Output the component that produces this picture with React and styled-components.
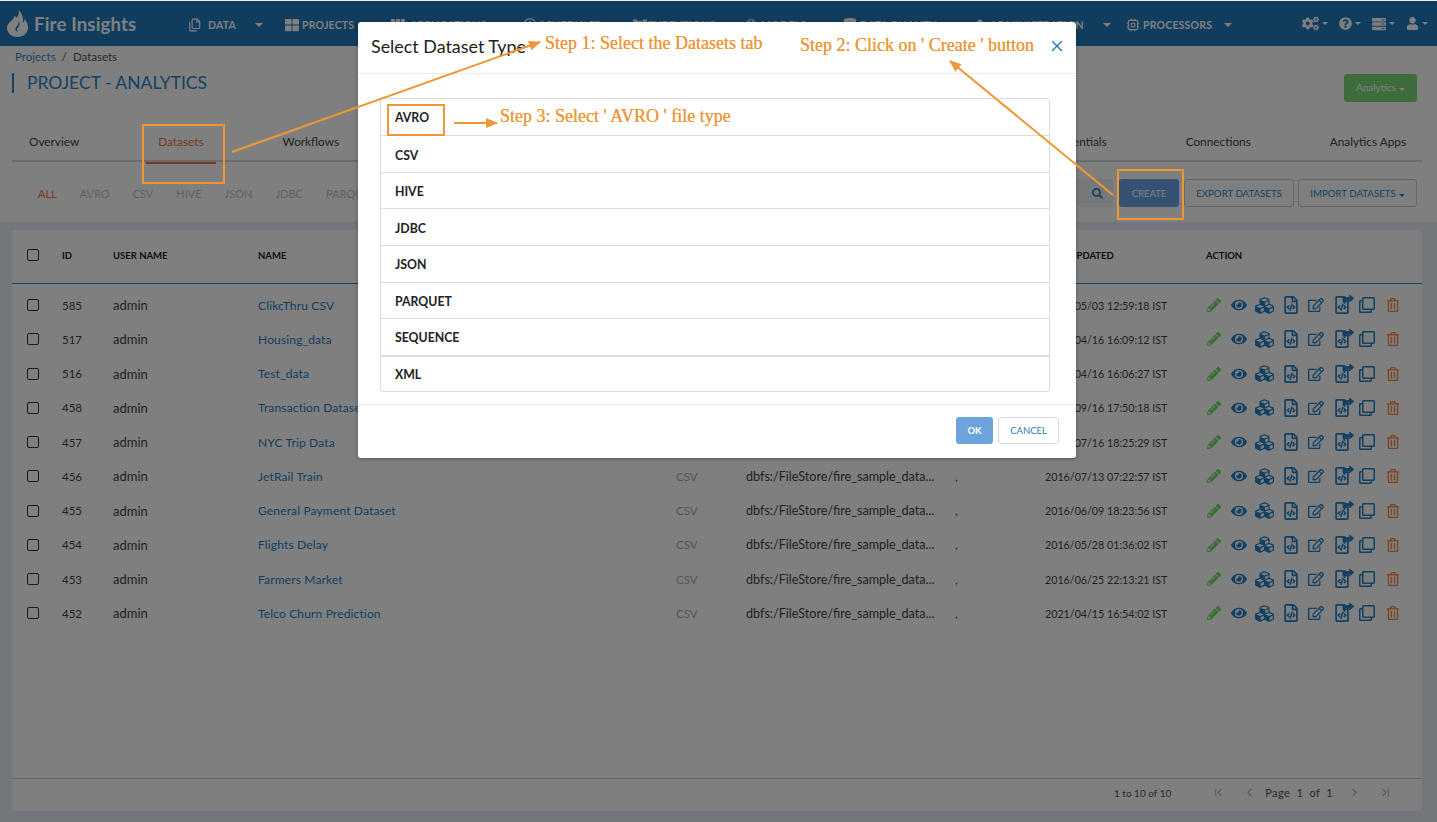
import React from "react";
import styled, { createGlobalStyle } from "styled-components";
import {
  FaCogs,
  FaCubes,
  FaEye,
  FaPencilAlt,
  FaQuestionCircle,
  FaRegClone,
  FaRegEdit,
  FaRegFileCode,
  FaRegTrashAlt,
  FaSearch,
  FaServer,
  FaShare,
  FaTh,
  FaThLarge,
  FaUser,
  FaDatabase,
  FaUserShield,
  FaRegClock,
  FaProjectDiagram,
} from "react-icons/fa";
import {
  LuChevronLeft,
  LuChevronRight,
  LuChevronFirst,
  LuChevronLast,
  LuX,
  LuFiles,
  LuCpu,
} from "react-icons/lu";

const navItems = [
  { label: "DATA", icon: <LuFiles />, w: 97, iconW: 20 },
  { label: "PROJECTS", icon: <FaThLarge />, w: 106, iconW: 17 },
  { label: "APPLICATIONS", icon: <FaTh />, w: 132, iconW: 19 },
  { label: "SCHEDULER", icon: <FaRegClock />, w: 110, iconW: 16 },
  { label: "EXECUTIONS", icon: <FaProjectDiagram />, w: 111, iconW: 15 },
  { label: "MODELS", icon: <FaCubes />, w: 99, iconW: 17 },
  { label: "DATA QUALITY", icon: <FaDatabase />, w: 132, iconW: 17 },
  { label: "ADMINISTRATION", icon: <FaUserShield />, w: 151, iconW: 15 },
  { label: "PROCESSORS", icon: <LuCpu />, w: 116, iconW: 17, caretGap: 12 },
];

const tabsLeft = ["Overview", "Datasets", "Workflows", "Analytics", "Executions", "Schedules"];
const tabsRight = ["Credentials", "Connections", "Analytics Apps"];
const filters = ["ALL", "AVRO", "CSV", "HIVE", "JSON", "JDBC", "PARQUET", "SEQUENCE", "XML"];
const types = ["AVRO", "CSV", "HIVE", "JDBC", "JSON", "PARQUET", "SEQUENCE", "XML"];

const rows = [
  [585, "ClikcThru CSV", "2021/05/03 12:59:18 IST"],
  [517, "Housing_data", "2021/04/16 16:09:12 IST"],
  [516, "Test_data", "2021/04/16 16:06:27 IST"],
  [458, "Transaction Dataset", "2016/09/16 17:50:18 IST"],
  [457, "NYC Trip Data", "2016/07/16 18:25:29 IST"],
  [456, "JetRail Train", "2016/07/13 07:22:57 IST"],
  [455, "General Payment Dataset", "2016/06/09 18:23:56 IST"],
  [454, "Flights Delay", "2016/05/28 01:36:02 IST"],
  [453, "Farmers Market", "2016/06/25 22:13:21 IST"],
  [452, "Telco Churn Prediction", "2021/04/15 16:54:02 IST"],
];

export default function App() {
  return (
    <Page>
      <GlobalStyle />
      <Header>
        <Logo>
          <svg width="21" height="27" viewBox="0 0 21 27">
            <path
              fill="#fff"
              d="M11.5 0c1.2 4 -1 6.400 -2 8 -.7-1-1.300-1.600-2.300-2.200C7.400 8 5.800 9.600 3.500 11.500 1.200 13.500 0 15.500 0 18c0 5 4.500 9 10.500 9S21 23 21 17.500c0-3.500-1.500-6.500-3.500-8.500 0 1.500-.5 3-1.500 3.500C16.500 8 15 3 11.500 0z"
            />
            <path
              fill="#2078bc"
              d="M11.500 11c.6 2.500-.6 4-1.700 5.200-1 1.100-1.800 2.200-1.300 3.700.4 1.100 1.400 1.800 2.600 1.700-1-.6-1.300-1.500-1-2.500.4-1.300 2-2.500 2.300-4.300.2-1.400-.1-2.800-.9-3.800z"
            />
          </svg>
          <LogoText>Fire Insights</LogoText>
        </Logo>
        <Nav>
          {navItems.map((item) => (
            <NavItem key={item.label} $w={item.w}>
              <NavIcon $w={item.iconW}>{item.icon}</NavIcon>
              {item.label}
              <Caret $gap={item.caretGap || 19} />
            </NavItem>
          ))}
        </Nav>
        <HeaderTools>
          <ToolIcon $size={17}><FaCogs /><SmallCaret /></ToolIcon>
          <ToolIcon><FaQuestionCircle /><SmallCaret /></ToolIcon>
          <ToolIcon $size={14}><FaServer /><SmallCaret /></ToolIcon>
          <ToolIcon><FaUser /><SmallCaret /></ToolIcon>
        </HeaderTools>
      </Header>

      <TopPanel>
        <Breadcrumb>
          <CrumbLink>Projects</CrumbLink>
          <span>/</span>
          <span>Datasets</span>
        </Breadcrumb>
        <TitleRow>
          <Title>PROJECT - ANALYTICS</Title>
          <GreenButton>Analytics<Caret $gap={3} $small /></GreenButton>
        </TitleRow>
        <Tabs>
          <TabGroup>
            {tabsLeft.map((t) => (
              <Tab key={t} $active={t === "Datasets"}>{t}</Tab>
            ))}
          </TabGroup>
          <TabGroup>
            {tabsRight.map((t) => (
              <Tab key={t}>{t}</Tab>
            ))}
          </TabGroup>
        </Tabs>
        <FilterRow>
          <Filters>
            {filters.map((f) => (
              <Filter key={f} $active={f === "ALL"}>{f}</Filter>
            ))}
          </Filters>
          <Actions>
            <SearchBox><FaSearch /></SearchBox>
            <SolidButton>CREATE</SolidButton>
            <OutlineButton $w={110}>EXPORT DATASETS</OutlineButton>
            <OutlineButton $w={119}>IMPORT DATASETS<Caret $gap={3} $small /></OutlineButton>
          </Actions>
        </FilterRow>
      </TopPanel>

      <Card>
        <HeadRow>
          <Check />
          <span>ID</span>
          <span>USER NAME</span>
          <span>NAME</span>
          <span>FORMAT</span>
          <span>PATH</span>
          <span>HEADER</span>
          <span>LAST UPDATED</span>
          <span>ACTION</span>
        </HeadRow>
        <TableBody>
          {rows.map(([id, name, updated]) => (
            <Row key={id}>
              <Check />
              <Cell $size={11.5}>{id}</Cell>
              <Cell $size={13}>admin</Cell>
              <NameLink>{name}</NameLink>
              <Muted>CSV</Muted>
              <Cell $size={12.6}>dbfs:/FileStore/fire_sample_data...</Cell>
              <Cell>,</Cell>
              <Cell $size={10.7}>{updated}</Cell>
              <ActionIcons>
                <ActionIcon $color="#70dc60"><FaPencilAlt /></ActionIcon>
                <ActionIcon $size={16}><FaEye /></ActionIcon>
                <ActionIcon $size={19}><FaCubes /></ActionIcon>
                <ActionIcon $size={18}><FaRegFileCode /></ActionIcon>
                <ActionIcon $size={16}><FaRegEdit /></ActionIcon>
                <ActionIcon $size={18}>
                  <FaRegFileCode />
                  <ShareBadge><FaShare /></ShareBadge>
                </ActionIcon>
                <ActionIcon $size={16}><FaRegClone /></ActionIcon>
                <ActionIcon $color="#fb8248" $size={14}><FaRegTrashAlt /></ActionIcon>
              </ActionIcons>
            </Row>
          ))}
        </TableBody>
        <Pagination>
          <PageCount>1 to 10 of 10</PageCount>
          <PagerIcons $left={41} $right={9}>
            <LuChevronFirst />
            <LuChevronLeft />
          </PagerIcons>
          <PageText>Page&nbsp; 1 &nbsp;of&nbsp; 1</PageText>
          <PagerIcons $left={15} $right={0}>
            <LuChevronRight />
            <LuChevronLast />
          </PagerIcons>
        </Pagination>
      </Card>

      <Backdrop />
      <ModalLayer>
        <Modal>
          <ModalHead>
            <ModalTitle>Select Dataset Type</ModalTitle>
            <CloseBtn><LuX /></CloseBtn>
          </ModalHead>
          <ModalBody>
            <TypeList>
              {types.map((t) => (
                <TypeItem key={t}>{t}</TypeItem>
              ))}
            </TypeList>
          </ModalBody>
          <ModalFoot>
            <OkButton>OK</OkButton>
            <CancelButton>CANCEL</CancelButton>
          </ModalFoot>
        </Modal>
      </ModalLayer>

      <Arrows viewBox="0 0 1437 822" width="1437" height="822">
        <defs>
          <marker id="tip" markerWidth="12" markerHeight="10" refX="11" refY="5" orient="auto" markerUnits="userSpaceOnUse">
            <path d="M0 0 L12 5 L0 10 Z" fill="#ee9737" />
          </marker>
        </defs>
        <line x1="232" y1="152" x2="540" y2="42" stroke="#ee9737" strokeWidth="2" markerEnd="url(#tip)" />
        <line x1="1113" y1="195" x2="950" y2="61" stroke="#ee9737" strokeWidth="2" markerEnd="url(#tip)" />
        <line x1="454" y1="123" x2="497" y2="123" stroke="#ee9737" strokeWidth="2" markerEnd="url(#tip)" />
      </Arrows>
      <Callout $left={142} $top={124} $w={83} $h={60} />
      <Callout $left={1117} $top={169} $w={67} $h={51} />
      <Callout $left={387} $top={104} $w={58} $h={32} />
      <Note $left={545} $top={33}>Step 1: Select the Datasets tab</Note>
      <Note $left={800} $top={35}>Step 2: Click on ' Create ' button</Note>
      <Note $left={500} $top={106}>Step 3: Select ' AVRO ' file type</Note>
    </Page>
  );
}

const GlobalStyle = createGlobalStyle`
  html, body {
    margin: 0;
    padding: 0;
    overflow: hidden;
  }
  body {
    font-family: Lato, "Open Sans", sans-serif;
    color: #333;
  }
  * {
    box-sizing: border-box;
  }
`;

const Page = styled.div`
  position: relative;
  width: 1437px;
  height: 822px;
  overflow: hidden;
  background: #e6eef6;
  padding-top: 1px;
`;

const Header = styled.header`
  height: 45px;
  background: #2078bc;
  display: flex;
  align-items: center;
  color: #fff;
`;

const Logo = styled.div`
  width: 188px;
  flex-shrink: 0;
  padding-left: 7px;
  display: flex;
  align-items: center;
  gap: 6px;
`;

const LogoText = styled.span`
  font-size: 18.5px;
  font-weight: 700;
  letter-spacing: 0.2px;
  padding-top: 1px;
`;

const Nav = styled.nav`
  display: flex;
  align-items: center;
  flex: 1;
  padding-top: 2px;
`;

const NavItem = styled.div`
  flex: 0 0 ${(p) => p.$w}px;
  display: flex;
  align-items: center;
  font-size: 10.5px;
  font-weight: 700;
  white-space: nowrap;
  letter-spacing: 0.2px;
`;

const NavIcon = styled.span`
  display: inline-flex;
  width: ${(p) => p.$w}px;
  font-size: 14px;
`;

const Caret = styled.i`
  display: inline-block;
  width: 0;
  height: 0;
  margin-left: ${(p) => p.$gap}px;
  border-left: ${(p) => (p.$small ? 3 : 4)}px solid transparent;
  border-right: ${(p) => (p.$small ? 3 : 4)}px solid transparent;
  border-top: ${(p) => (p.$small ? 3 : 4)}px solid currentColor;
`;

const HeaderTools = styled.div`
  display: flex;
  align-items: center;
  gap: 11px;
  padding-right: 9px;
`;

const ToolIcon = styled.span`
  display: inline-flex;
  align-items: center;
  font-size: ${(p) => p.$size || 13}px;
`;

const SmallCaret = styled.i`
  width: 0;
  height: 0;
  margin-left: 3px;
  border-left: 3px solid transparent;
  border-right: 3px solid transparent;
  border-top: 3px solid currentColor;
`;

const TopPanel = styled.section`
  height: 176px;
  background: #fff;
  padding: 0 20px 0 12px;
`;

const Breadcrumb = styled.div`
  display: flex;
  gap: 6px;
  height: 20px;
  align-items: center;
  padding-left: 3px;
  font-size: 11.5px;
  color: #555;
`;

const CrumbLink = styled.span`
  color: #3f86c4;
`;

const TitleRow = styled.div`
  display: flex;
  justify-content: space-between;
  align-items: center;
  height: 36px;
  margin-top: 2px;
`;

const Title = styled.h1`
  margin: -6px 0 0;
  padding-left: 13px;
  border-left: 2px solid #2b85c8;
  font-size: 17.5px;
  font-weight: 400;
  line-height: 20px;
  color: #2b85c8;
`;

const GreenButton = styled.button`
  width: 73px;
  height: 28px;
  border: 0;
  border-radius: 3px;
  background: #7ed97a;
  color: #fff;
  font: 400 10px Lato, sans-serif;
  margin-top: 3px;
  padding: 0 0 2px;
`;

const Tabs = styled.div`
  display: flex;
  justify-content: space-between;
  height: 58px;
  padding: 30px 16px 0 17px;
  border-bottom: 2px solid #d8d8d8;
  width: 1410px;
`;

const TabGroup = styled.div`
  display: flex;
  gap: 79px;
`;

const Tab = styled.div`
  position: relative;
  height: 15px;
  font-size: 11.8px;
  color: ${(p) => (p.$active ? "#f0743d" : "#444")};
  &::after {
    content: "";
    display: ${(p) => (p.$active ? "block" : "none")};
    position: absolute;
    left: -12px;
    right: -12px;
    bottom: -15px;
    height: 2px;
    background: #f0743d;
  }
`;

const FilterRow = styled.div`
  display: flex;
  justify-content: space-between;
  align-items: center;
  height: 28px;
  margin-top: 17px;
  width: 1405px;
`;

const Filters = styled.div`
  display: flex;
  gap: 23px;
  padding-left: 26px;
  font-size: 11px;
`;

const Filter = styled.span`
  color: ${(p) => (p.$active ? "#f0743d" : "#c4c4c4")};
`;

const Actions = styled.div`
  display: flex;
  gap: 4px;
  align-items: center;
`;

const SearchBox = styled.div`
  width: 130px;
  height: 28px;
  border-radius: 3px;
  background: #eef0f2;
  color: #2b85c8;
  font-size: 11px;
  display: flex;
  align-items: center;
  justify-content: flex-end;
  padding-right: 10px;
  margin-right: 2px;
`;

const SolidButton = styled.button`
  width: 60px;
  height: 28px;
  border: 0;
  border-radius: 3px;
  background: #6aa4e6;
  color: #fff;
  font: 400 9.5px Lato, sans-serif;
  margin-right: 1px;
`;

const OutlineButton = styled.button`
  width: ${(p) => p.$w}px;
  height: 28px;
  border: 1px solid #ccc;
  border-radius: 3px;
  background: #fff;
  color: #2b85c8;
  font: 400 9.7px Lato, sans-serif;
  padding: 0;
`;

const Card = styled.section`
  margin: 8px 15px 0 12px;
  height: 581px;
  background: #fff;
  border-radius: 4px;
  display: flex;
  flex-direction: column;
`;

const tableColumns = "35px 51px 145px 418px 70px 209px 90px 161px 1fr";

const HeadRow = styled.div`
  display: grid;
  grid-template-columns: ${tableColumns};
  align-items: center;
  height: 54px;
  padding: 0 0 3px 15px;
  border-bottom: 1px solid #2b85c8;
  font-size: 9.5px;
  font-weight: 700;
  color: #222;
`;

const TableBody = styled.div`
  flex: 1;
  padding-top: 4px;
`;

const Row = styled.div`
  display: grid;
  grid-template-columns: ${tableColumns};
  align-items: center;
  height: 34.25px;
  padding-left: 15px;
  color: #444;
`;

const Cell = styled.span`
  font-size: ${(p) => p.$size || 11.5}px;
  white-space: nowrap;
`;

const Check = styled.i`
  display: block;
  width: 12px;
  height: 12px;
  border: 1.5px solid #333;
  border-radius: 2px;
`;

const NameLink = styled.span`
  color: #2580c4;
  font-size: 12px;
  letter-spacing: 0.15px;
  white-space: nowrap;
`;

const Muted = styled.span`
  color: #aaa;
  font-size: 11.5px;
`;

const ActionIcons = styled.div`
  display: grid;
  grid-template-columns: repeat(8, 25.6px);
  margin-left: -5px;
  align-items: center;
`;

const ActionIcon = styled.span`
  position: relative;
  display: flex;
  justify-content: center;
  color: ${(p) => p.$color || "#2580c4"};
  font-size: ${(p) => p.$size || 14}px;
`;

const ShareBadge = styled.span`
  position: absolute;
  right: 1px;
  top: -2px;
  font-size: 11px;
`;

const Pagination = styled.div`
  height: 33px;
  border-top: 1px solid #ccc;
  display: flex;
  justify-content: flex-end;
  align-items: center;
  padding: 0 30px 5px 0;
  color: #555;
`;

const PageCount = styled.span`
  font-size: 10px;
`;

const PagerIcons = styled.span`
  display: flex;
  gap: 18px;
  color: #b5b5b5;
  font-size: 13px;
  margin: 0 ${(p) => p.$right}px 0 ${(p) => p.$left}px;
`;

const PageText = styled.span`
  white-space: nowrap;
  font-size: 11px;
  letter-spacing: 0.35px;
`;

const Backdrop = styled.div`
  position: absolute;
  inset: 1px 0 0 0;
  background: rgba(0, 0, 0, 0.5);
`;

const ModalLayer = styled.div`
  position: absolute;
  inset: 0;
  display: flex;
  justify-content: center;
  padding: 22px 3px 0 0;
`;

const Modal = styled.div`
  width: 718px;
  height: 436px;
  background: #fff;
  border-radius: 3px;
  box-shadow: 0 1px 4px rgba(0, 0, 0, 0.3);
  display: flex;
  flex-direction: column;
`;

const ModalHead = styled.div`
  height: 52px;
  border-bottom: 1px solid #e9ecef;
  display: flex;
  justify-content: space-between;
  align-items: center;
  padding: 0 10px 2px 13px;
`;

const ModalTitle = styled.h5`
  margin: 0;
  font-size: 17.9px;
  font-weight: 400;
  color: #222;
`;

const CloseBtn = styled.span`
  display: flex;
  font-size: 18px;
  color: #2b7cb5;
`;

const ModalBody = styled.div`
  flex: 1;
  padding: 24px 26px 12px 22px;
`;

const TypeList = styled.div`
  border: 1px solid #ddd;
  border-radius: 3px;
`;

const TypeItem = styled.div`
  height: 36.6px;
  display: flex;
  align-items: center;
  padding: 2px 0 0 14px;
  font-size: 12.3px;
  font-weight: 700;
  color: #222;
  border-top: 1px solid #ddd;
  &:first-child {
    border-top: 0;
  }
  &:last-child {
    border-top-width: 2px;
    padding-top: 0;
  }
`;

const ModalFoot = styled.div`
  height: 54px;
  border-top: 1px solid #e6ebf0;
  display: flex;
  justify-content: flex-end;
  align-items: center;
  gap: 5px;
  padding: 0 17px 2px 0;
`;

const OkButton = styled.button`
  width: 37px;
  height: 27px;
  border: 0;
  border-radius: 3px;
  background: #6ea3dc;
  color: #fff;
  font: 700 9.5px Lato, sans-serif;
`;

const CancelButton = styled.button`
  width: 61px;
  height: 27px;
  border: 1px solid #d5d9dd;
  border-radius: 3px;
  background: #fff;
  color: #2b7cb5;
  font: 400 9.5px Lato, sans-serif;
`;

const Arrows = styled.svg`
  position: absolute;
  left: 0;
  top: 0;
  pointer-events: none;
`;

const Callout = styled.div`
  position: absolute;
  left: ${(p) => p.$left}px;
  top: ${(p) => p.$top}px;
  width: ${(p) => p.$w}px;
  height: ${(p) => p.$h}px;
  border: 2px solid #ee9737;
`;

const Note = styled.div`
  position: absolute;
  left: ${(p) => p.$left}px;
  top: ${(p) => p.$top}px;
  font-family: "Liberation Serif", serif;
  font-size: 18px;
  line-height: 20px;
  color: #ee9737;
  white-space: nowrap;
  text-shadow: 0 0 0.5px #ee9737;
`;
